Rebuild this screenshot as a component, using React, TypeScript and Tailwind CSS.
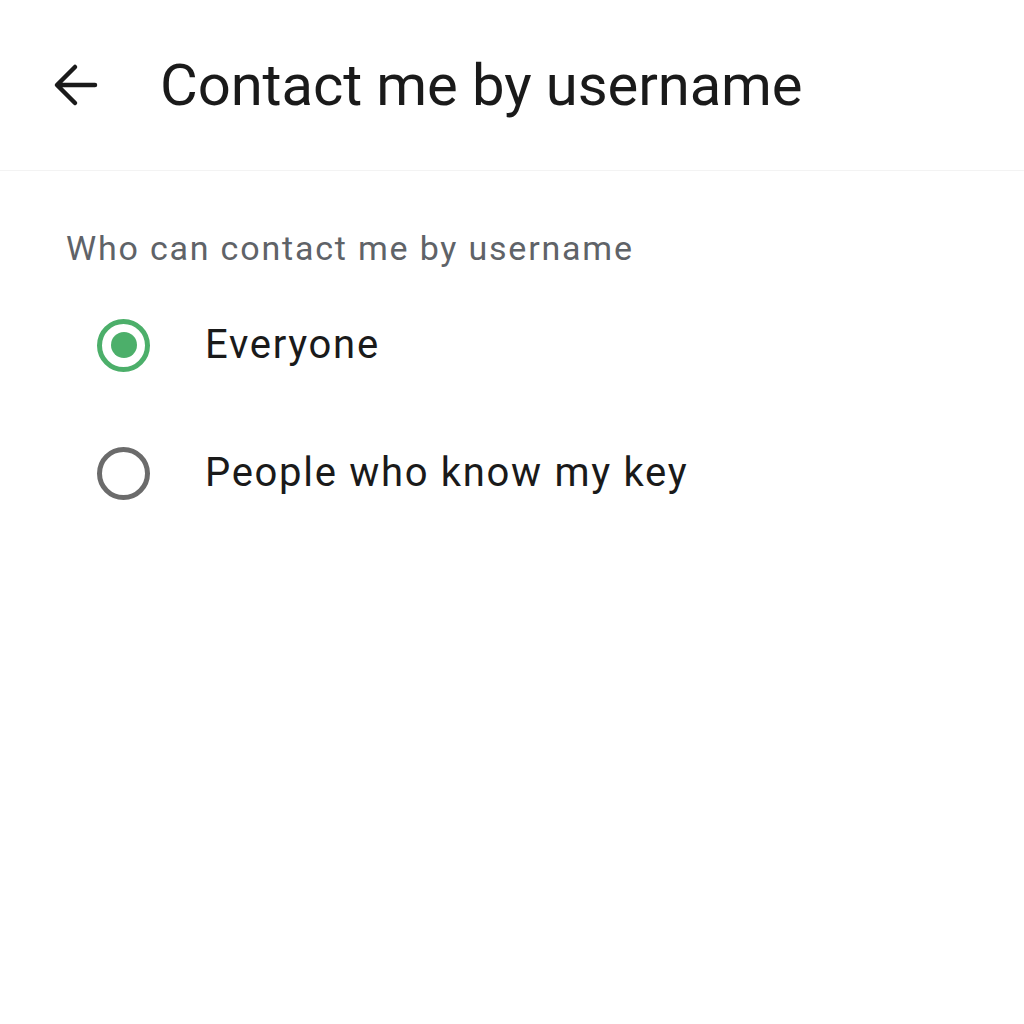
import { useState } from 'react';

const options = ['Everyone', 'People who know my key'];

function Radio({ checked }: { checked: boolean }) {
  return (
    <div
      className={`flex h-[53px] w-[53px] shrink-0 items-center justify-center rounded-full border-[5px] ${
        checked ? 'border-[#4caf6a]' : 'border-[#6b6b6b]'
      }`}
    >
      {checked && <div className="h-[26px] w-[26px] rounded-full bg-[#4caf6a]" />}
    </div>
  );
}

export default function App() {
  const [selected, setSelected] = useState(0);

  return (
    <div className="min-h-[1024px] bg-white text-[#1a1a1a]" style={{ fontFamily: 'Roboto, sans-serif' }}>
      {/* Top bar */}
      <div className="flex h-[171px] items-center border-b border-[#f3f3f3] pl-[53px]">
        <svg width="46" height="46" viewBox="0 0 46 46" fill="none" stroke="#1a1a1a" strokeWidth="4.5" strokeLinecap="round" strokeLinejoin="round">
          <path d="M42 23H5M22 5L4 23l18 18" />
        </svg>
        <h1 className="ml-[61px] text-[58px] leading-none tracking-[-0.1px]">Contact me by username</h1>
      </div>

      <div className="pt-[57px]">
        <p className="pl-[66px] text-[34px] leading-[40px] tracking-[1.8px] text-[#5f6368]">Who can contact me by username</p>
        <div className="mt-[13px]">
          {options.map((opt, i) => (
            <button
              key={opt}
              onClick={() => setSelected(i)}
              className="flex h-[128px] w-full items-center pl-[97px] text-left"
            >
              <Radio checked={selected === i} />
              <span className="ml-[55px] text-[40px] leading-none tracking-[1.7px]">{opt}</span>
            </button>
          ))}
        </div>
      </div>
    </div>
  );
}
